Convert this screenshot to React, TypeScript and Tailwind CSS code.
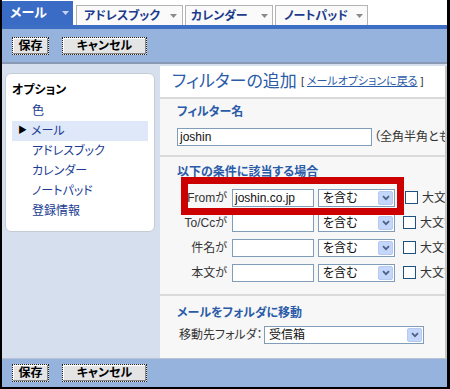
import React from "react";

function TabArrow({ light }: { light?: boolean }) {
  return (
    <svg width="7" height="4" viewBox="0 0 7 4" className="shrink-0">
      <path d="M0 0H7L3.5 4Z" fill={light ? "#c8d4ee" : "#8a8a8a"} />
    </svg>
  );
}

function Chevron() {
  return (
    <svg width="8" height="6" viewBox="0 0 8 6">
      <path d="M1 1.2L4 4.2L7 1.2" stroke="#4d6185" strokeWidth="1.8" fill="none" />
    </svg>
  );
}

function Select({ className, text }: { className: string; text: string }) {
  return (
    <div className={"flex h-[18px] items-stretch border border-[#7f9db9] bg-white " + className}>
      <div className="flex-1 pl-[4px] text-[12px] leading-[16px] text-[#111]">{text}</div>
      <div className="m-[1px] flex w-[15px] items-center justify-center rounded-[2px] border border-[#b6c9f3] bg-[#c5d6fb]">
        <Chevron />
      </div>
    </div>
  );
}

function Btn({ className, label }: { className: string; label: string }) {
  return (
    <div
      className={
        "flex h-[18px] items-center justify-center border border-dotted border-[#222] bg-[#e4e4e4] text-[12px] font-bold text-black shadow-[inset_-1px_-1px_0_#8a8a8a,inset_1px_1px_0_#fff] " +
        className
      }
    >
      {label}
    </div>
  );
}

function Checkbox({ extra }: { extra?: string }) {
  return <div className={"h-[13px] w-[13px] shrink-0 border border-[#1c5180] bg-white " + (extra ?? "")} />;
}

function CondRow({ label, value, first }: { label: string; value: string; first?: boolean }) {
  return (
    <div className="flex h-[25px] items-center whitespace-nowrap">
      <div className="w-[50px] shrink-0 text-right text-[12px] text-[#333]">{label}</div>
      <div className="ml-[5px] flex h-[18px] w-[82px] shrink-0 items-center border border-[#7f9db9] bg-white pl-[2px] text-[12px] text-[#111]">
        {value}
      </div>
      <Select className="ml-[4px] w-[77px] shrink-0" text="を含む" />
      <Checkbox extra={first ? "ml-[10px]" : "ml-[8px]"} />
      <div className="ml-[4px] text-[12px] text-[#333]">大文字小文字を区別する</div>
    </div>
  );
}

export default function App() {
  const sideItems = ["色", "メール", "アドレスブック", "カレンダー", "ノートパッド", "登録情報"];
  return (
    <div className="flex h-[389px] w-[450px] flex-col overflow-hidden border-b-2 border-l-2 border-r-[3px] border-black bg-white font-['Liberation_Sans','Noto_Sans_CJK_JP',sans-serif] [font-feature-settings:'palt']">
      {/* Tabs */}
      <div className="flex h-[25px] items-end bg-white">
        <div className="flex h-[24px] w-[71px] items-center bg-[#3a6cc6] pl-[8px] pr-[4px]">
          <span className="flex-1 text-[13px] font-bold text-white">メール</span>
          <TabArrow light />
        </div>
        <div className="ml-[3px] flex h-[20px] w-[107px] items-center border border-b-0 border-[#b4b4b4] bg-[#fafafa] pl-[7px] pr-[5px]">
          <span className="flex-1 text-[12px] font-bold text-[#1d3b8c]">アドレスブック</span>
          <TabArrow />
        </div>
        <div className="ml-[2px] flex h-[20px] w-[88px] items-center border border-b-0 border-[#b4b4b4] bg-[#fafafa] pl-[5px] pr-[4px]">
          <span className="flex-1 text-[12px] font-bold text-[#1d3b8c]">カレンダー</span>
          <TabArrow />
        </div>
        <div className="ml-[2px] flex h-[20px] w-[93px] items-center border border-b-0 border-[#b4b4b4] bg-[#fafafa] pl-[8px] pr-[4px]">
          <span className="flex-1 text-[12px] font-bold text-[#1d3b8c]">ノートパッド</span>
          <TabArrow />
        </div>
      </div>
      <div className="h-[4px] bg-[#3c6ec4]" />
      {/* Toolbar */}
      <div className="flex h-[33px] items-center gap-[13px] bg-[#96b3de] pl-[10px]">
        <Btn className="w-[37px]" label="保存" />
        <Btn className="w-[85px]" label="キャンセル" />
      </div>
      <div className="h-[2px] bg-[#8a9ab4]" />
      {/* Body */}
      <div className="flex min-h-0 flex-1 bg-[#d6dfed]">
        <div className="ml-[3px] mt-[9px] h-[159px] w-[150px] shrink-0 rounded-[6px] border border-[#c6ccd6] bg-white pt-[6px]">
          <div className="pl-[6px] text-[12px] font-bold leading-[20px] text-black">オプション</div>
          <div className="mt-[1px] flex flex-col">
            {sideItems.map((it) => (
              <div
                key={it}
                className={
                  "mx-[6px] flex h-[20px] items-center text-[12px] text-[#1a3c94] " +
                  (it === "メール" ? "bg-[#dfe8f8]" : "")
                }
              >
                {it === "メール" ? (
                  <span className="ml-[6px] mr-[4px] text-[9px] text-black">▶</span>
                ) : (
                  <span className="w-[20px]" />
                )}
                {it}
              </div>
            ))}
          </div>
        </div>
        {/* Main panel */}
        <div className="ml-[5px] mt-[2px] flex min-w-0 flex-1 flex-col overflow-hidden border-r-2 border-[#c4c4c4] bg-[#f7f7f7]">
          <div className="flex h-[31px] shrink-0 items-center whitespace-nowrap bg-white pl-[12px]">
            <span className="text-[17px] leading-[20px] text-[#2a5ba8]">フィルターの追加</span>
            <span className="ml-[4px] text-[11px] text-[#333]">[</span>
            <span className="ml-[3px] text-[11px] text-[#2a5ba8] underline">メールオプションに戻る</span>
            <span className="ml-[3px] text-[11px] text-[#333]">]</span>
          </div>
          <div className="h-[2px] shrink-0 bg-[#dadada]" />
          {/* Section 1 */}
          <div className="h-[56px] shrink-0 whitespace-nowrap pl-[17px] pt-[5px]">
            <div className="text-[12px] font-bold leading-[16px] text-[#2a5ba8]">フィルター名</div>
            <div className="mt-[8px] flex items-center">
              <div className="flex h-[18px] w-[195px] shrink-0 items-center border border-[#7f9db9] bg-white pl-[2px] text-[12px] text-[#111]">
                joshin
              </div>
              <span className="ml-[2px] text-[12px] text-[#333]">（全角半角ともに可）</span>
            </div>
          </div>
          <div className="h-[2px] shrink-0 bg-[#dadada]" />
          {/* Section 2 */}
          <div className="relative h-[137px] shrink-0 pl-[17px] pt-[7px]">
            <div className="text-[12px] font-bold leading-[16px] text-[#2a5ba8]">以下の条件に該当する場合</div>
            <div className="mt-[5px] flex flex-col">
              <CondRow label="Fromが" value="joshin.co.jp" first />
              <CondRow label="To/Ccが" value="" />
              <CondRow label="件名が" value="" />
              <CondRow label="本文が" value="" />
            </div>
            <div className="pointer-events-none absolute left-[21px] top-[20px] h-[38px] w-[223px] border-[7px] border-[#cc0000]" />
          </div>
          <div className="h-[2px] shrink-0 bg-[#dadada]" />
          {/* Section 3 */}
          <div className="flex-1 whitespace-nowrap pl-[17px] pt-[9px]">
            <div className="text-[12px] font-bold leading-[16px] text-[#2a5ba8]">メールをフォルダに移動</div>
            <div className="mt-[5px] flex items-center">
              <span className="ml-[2px] w-[85px] text-[12px] text-[#333]">移動先フォルダ：</span>
              <Select className="w-[160px] shrink-0" text="受信箱" />
            </div>
          </div>
        </div>
      </div>
      {/* Bottom bar */}
      <div className="h-[1px] bg-[#b8c2d2]" />
      <div className="flex h-[28px] items-center gap-[13px] bg-[#96b3de] pl-[10px]">
        <Btn className="w-[37px]" label="保存" />
        <Btn className="w-[85px]" label="キャンセル" />
      </div>
    </div>
  );
}
